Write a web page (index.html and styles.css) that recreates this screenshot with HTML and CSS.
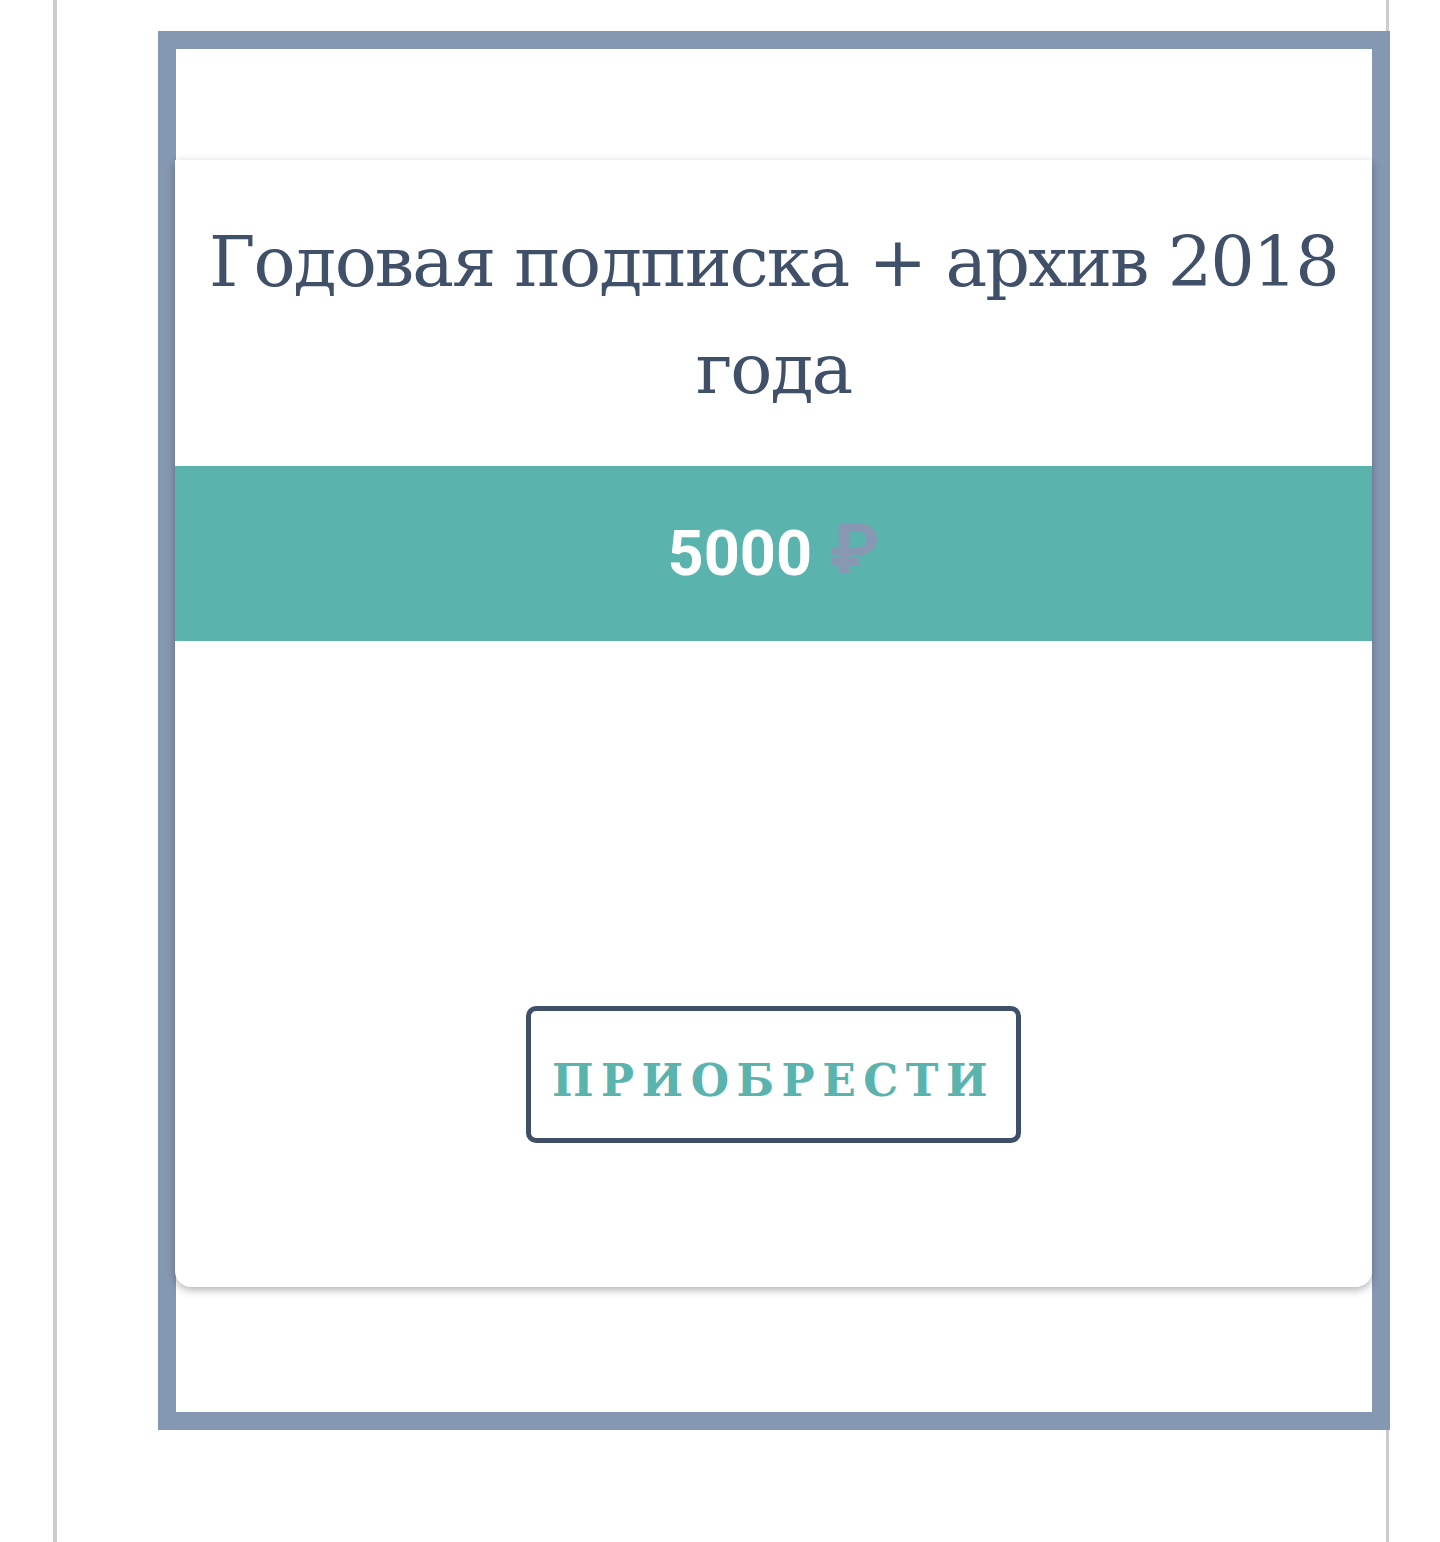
FILE: index.html
```html
<!DOCTYPE html>
<html lang="ru">
<head>
    <meta charset="UTF-8">
    <meta name="viewport" content="width=device-width, initial-scale=1.0">
    <title>Подписка</title>
    <link rel="stylesheet" href="styles.css">
</head>
<body>
    <!-- колонка страницы -->
    <div class="page-column">
        <!-- рамка тарифа -->
        <div class="tariff-frame">
            <div class="tariff-card">
                <h2 class="tariff-title">Годовая подписка + архив 2018 года</h2>
                <div class="tariff-price">
                    <span class="price-value">5000</span>
                    <span class="price-currency">₽</span>
                </div>
                <div class="tariff-action">
                    <button class="buy-btn">Приобрести</button>
                </div>
            </div>
        </div>
    </div>
</body>
</html>
```

FILE: styles.css
```css
* {
    margin: 0;
    padding: 0;
    box-sizing: border-box;
}

body {
    font-family: Roboto, 'Liberation Sans', sans-serif;
    background: #ffffff;
    color: #3f5068;
}

/* колонка страницы */
.page-column {
    margin-left: 53px;
    width: 1336px;
    min-height: 100vh;
    border-left: 4px solid #cccccc;
    border-right: 3px solid #cccccc;
    padding-top: 31px;
}

/* рамка тарифа */
.tariff-frame {
    margin-left: 101px;
    width: 1232px;
    border: 18px solid #8598b2;
    padding: 111px 0 125px;
    background: #ffffff;
}

.tariff-card {
    margin-left: -1px;
    width: 1197px;
    height: 1127px;
    background: #ffffff;
    border-radius: 0 0 16px 16px;
    box-shadow: 0 3px 9px rgba(0, 0, 0, 0.3);
    display: flex;
    flex-direction: column;
}

.tariff-title {
    font-family: 'DejaVu Serif', 'Liberation Serif', serif;
    font-weight: 300;
    font-size: 70px;
    line-height: 107px;
    letter-spacing: -2px;
    text-align: center;
    color: #3f5068;
    padding: 49px 30px 43px;
    height: 306px;
}

/* цена */
.tariff-price {
    height: 175px;
    background: #5bb3ae;
    display: flex;
    align-items: center;
    justify-content: center;
    gap: 18px;
    font-family: Roboto, sans-serif;
    font-weight: 700;
    font-size: 63px;
}

.price-value {
    color: #ffffff;
}

.price-currency {
    color: #8898b3;
    font-size: 70px;
    margin-top: -10px;
}

/* кнопка */
.tariff-action {
    flex: 1;
    display: flex;
    justify-content: center;
    padding-top: 365px;
}

.buy-btn {
    width: 495px;
    height: 137px;
    background: #ffffff;
    border: 5px solid #3f4f68;
    border-radius: 10px;
    padding: 12px 0 0 0;
    font-family: 'DejaVu Serif', 'Liberation Serif', serif;
    font-weight: 700;
    font-size: 44px;
    letter-spacing: 7.5px;
    text-transform: uppercase;
    color: #5bb3ae;
    cursor: pointer;
}
```
